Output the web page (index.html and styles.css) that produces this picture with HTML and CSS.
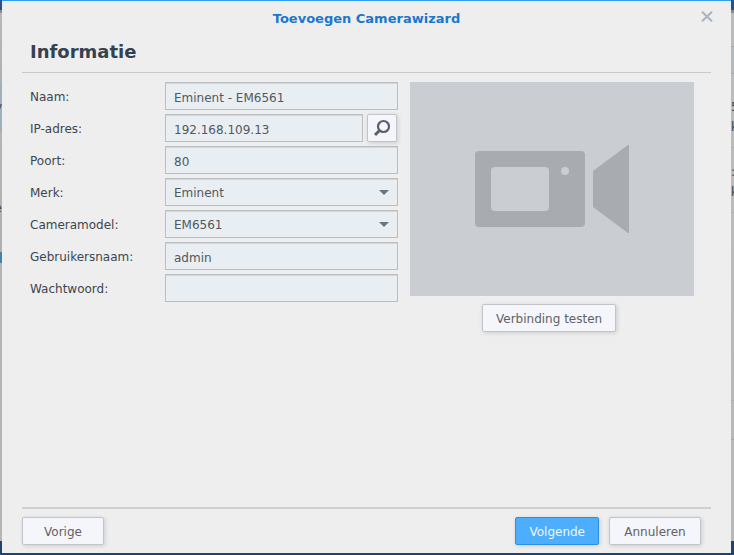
FILE: index.html
```html
<!DOCTYPE html>
<html lang="nl">
<head>
  <meta charset="UTF-8">
  <meta name="viewport" content="width=device-width, initial-scale=1.0">
  <title>Toevoegen Camerawizard</title>
  <link rel="stylesheet" href="styles.css">
</head>
<body>
  <div class="edge edge-left" aria-hidden="true">
    <span>y</span>
    <span>e</span>
  </div>

  <div class="dialog" role="dialog" aria-labelledby="dialogTitle">
    <div class="titlebar">
      <h1 id="dialogTitle">Toevoegen Camerawizard</h1>
      <button type="button" class="close" aria-label="Sluiten">
        <svg width="12" height="11" viewBox="0 0 12 11"><path d="M1 .7 L11 10.3 M11 .7 L1 10.3" fill="none" stroke="#a9b4c0" stroke-width="2"/></svg>
      </button>
    </div>

    <h2>Informatie</h2>

    <div class="content">
      <form class="fields" id="cameraForm">
        <label for="name">Naam:</label>
        <input type="text" id="name" value="Eminent - EM6561">

        <label for="ip">IP-adres:</label>
        <div class="ip-row">
          <input type="text" id="ip" value="192.168.109.13">
          <button type="button" class="btn search" aria-label="Zoeken">
            <svg width="18" height="18" viewBox="0 0 18 18"><circle cx="10.5" cy="7.5" r="5.5" fill="none" stroke="#5a6070" stroke-width="2.2"/><path d="M6.5 11.5 L2 16" fill="none" stroke="#5a6070" stroke-width="3"/></svg>
          </button>
        </div>

        <label for="port">Poort:</label>
        <input type="text" id="port" value="80">

        <label for="brand">Merk:</label>
        <div class="select-box">
          <select id="brand"><option>Eminent</option></select>
          <span class="arrow"></span>
        </div>

        <label for="model">Cameramodel:</label>
        <div class="select-box">
          <select id="model"><option>EM6561</option></select>
          <span class="arrow"></span>
        </div>

        <label for="user">Gebruikersnaam:</label>
        <input type="text" id="user" value="admin">

        <label for="pass">Wachtwoord:</label>
        <input type="password" id="pass">
      </form>

      <div class="preview">
        <svg class="camera" viewBox="0 0 284 214">
          <rect width="284" height="214" fill="#cacdd1"/>
          <rect x="65" y="69" width="110" height="76" rx="4" fill="#a8abaf"/>
          <rect x="81" y="85" width="58" height="44" rx="4" fill="#cacdd1"/>
          <circle cx="155" cy="89" r="4" fill="#cacdd1"/>
          <path d="M183 89 L218 63 H219 V151 H218 L183 125 Z" fill="#a8abaf"/>
        </svg>
        <button type="button" class="btn test">Verbinding testen</button>
      </div>
    </div>

    <div class="footer">
      <button type="button" class="btn prev">Vorige</button>
      <button type="submit" form="cameraForm" class="btn primary">Volgende</button>
      <button type="button" class="btn cancel">Annuleren</button>
    </div>
  </div>

  <div class="edge edge-right" aria-hidden="true">
    <span>5</span>
    <span>k</span>
    <span class="next-row">:</span>
    <span>k</span>
  </div>
</body>
</html>
```

FILE: styles.css
```css
* { box-sizing: border-box; }
body {
  display: grid;
  grid-template-columns: 2px 1fr 3px;
  min-height: 100vh;
  margin: 0;
  padding-bottom: 2px;
  background: #1f4374;
  font-family: "DejaVu Sans", Verdana, sans-serif;
  font-size: 12px;
  color: #3c4650;
}

/* page that shows behind the dialog */
.edge {
  display: flex;
  flex-direction: column;
  margin-bottom: 12px;
  padding-top: 97px;
  overflow: hidden;
  line-height: 20px;
}
.edge-left {
  gap: 81px;
  align-items: flex-end;
  background: linear-gradient(#28508c 10px, #8a8a8a 10px, #8a8a8a 13px, #b8b8b8 13px, #b0b0b0 82px, #9fb0bd 82px, #9fb0bd 132px, #b5b5b5 132px, #b0b0b0 252px, #4a80b0 252px, #4a80b0 263px, #b5b5b5 263px);
}
.edge-right {
  align-items: flex-start;
  background: linear-gradient(#28508c 10px, #8a8a8a 10px, #8a8a8a 13px, #bcbcbc 13px, #bcbcbc 46px, #949494 46px, #b4b9be 47px, #b4b9be 73px, #949494 73px, #bcbcbc 74px, #bcbcbc 147px, #a0a0a0 147px, #bcbcbc 148px, #bcbcbc 212px, #a0a0a0 212px, #bcbcbc 213px, #b8b8b8 400px, #a0a0a0 400px, #b8b8b8 401px, #b8b8b8 439px, #949494 439px, #b8b8b8 440px);
}
.next-row { margin-top: 25px; }

.dialog {
  display: flex;
  flex-direction: column;
  padding: 0 20px 8px;
  border-top: 1px solid #2f9df4;
  background: #eee;
}
.titlebar {
  display: grid;
  grid-template-columns: 1fr 12px;
  align-items: center;
  height: 34px;
  padding: 0 10px;
  margin-right: -12px;
}
h1 {
  margin: 2px 0 0;
  font-size: 13px;
  line-height: 16px;
  text-align: center;
  color: #1a78cc;
}
.close {
  display: flex;
  padding: 0;
  border: 0;
  background: none;
}
.close svg { margin-bottom: 4px; }
h2 {
  margin: 0 0 9px;
  padding: 5px 8px 9px;
  border-bottom: 1px solid #c8c9cb;
  font-size: 18px;
  line-height: 23px;
  color: #34424e;
}

.content {
  display: flex;
  gap: 12px;
  flex: 1;
  align-items: flex-start;
  padding: 0 17px 0 8px;
}
.fields {
  display: grid;
  grid-template-columns: 135px 1fr;
  row-gap: 4px;
  flex: 1;
}
label { line-height: 30px; height: 28px; }
input, select {
  width: 100%;
  min-width: 0;
  height: 28px;
  padding: 4px 8px 0;
  border: 1px solid #bbbec1;
  border-radius: 0;
  background: #e8eef2;
  box-shadow: inset 0 1px 0 #d3d7da;
  font: inherit;
  color: #53585d;
}
select {
  padding: 2px 8px 0;
  appearance: none;
}
.ip-row { display: flex; gap: 4px; padding-right: 1px; }
.select-box { position: relative; }
.arrow {
  position: absolute;
  top: 12px;
  right: 9px;
  border: 5px solid transparent;
  border-top-color: #6b7580;
  border-bottom: 0;
  pointer-events: none;
}

.preview { flex: 0 0 284px; }
.camera { display: block; width: 100%; margin-bottom: 8px; }

.btn {
  height: 28px;
  padding: 2px 13px 0;
  border: 1px solid #c2c4c7;
  border-radius: 2px;
  background: #f4f6fb;
  box-shadow: 1px 1px 4px rgba(0,0,0,0.15);
  font: inherit;
  color: #5f6266;
}
.search {
  display: flex;
  flex: 0 0 30px;
  align-items: center;
  justify-content: center;
  padding: 0;
}
.test { margin-left: 72px; }

.footer {
  display: flex;
  gap: 10px;
  padding: 8px 10px 0 0;
  border-top: 2px solid #d0d0d0;
}
.prev { width: 82px; margin-right: auto; }
.cancel { width: 92px; }
.primary {
  border-color: #2b90e0;
  background: #4caefc;
  color: #f0f8ff;
}
```
